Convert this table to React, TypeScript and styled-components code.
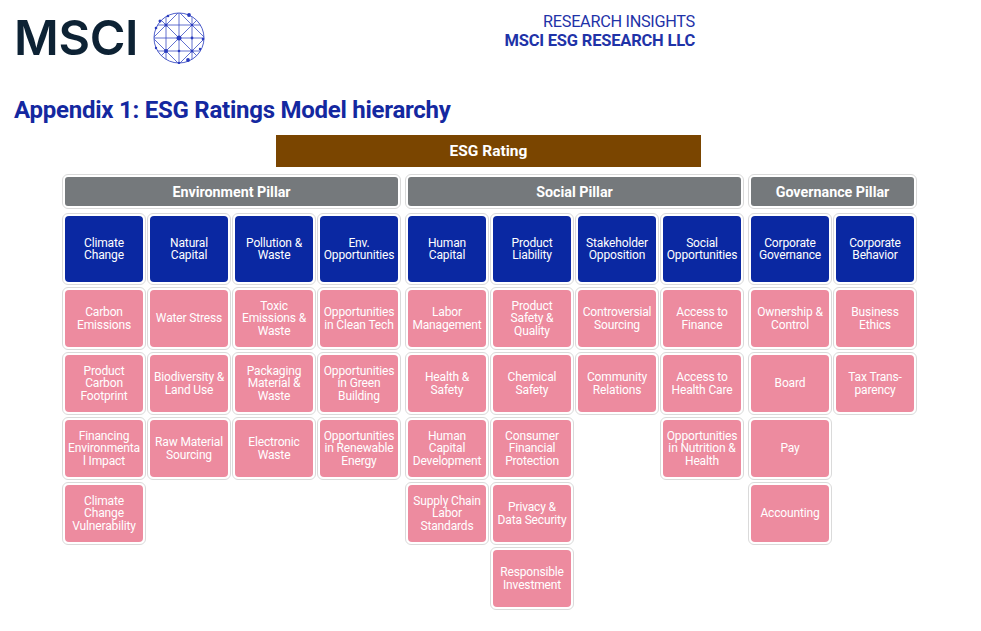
import React from "react";
import styled, { createGlobalStyle } from "styled-components";

const Global = createGlobalStyle`
  html, body { margin: 0; padding: 0; background: #ffffff; }
  body { font-family: Roboto, "Liberation Sans", Arial, sans-serif; }
`;

const Page = styled.div`
  width: 981px;
  height: 631px;
  overflow: hidden;
  background: #fff;
`;

const Header = styled.header`
  display: flex;
  justify-content: space-between;
  align-items: flex-start;
  width: 681px;
  padding: 12px 0 0 14px;
  height: 56px;
`;

const Logo = styled.div`
  display: flex;
  align-items: center;
  gap: 15px;
`;

const LogoText = styled.span`
  font-family: Inter, "Noto Sans", sans-serif;
  font-weight: 600;
  font-size: 48.5px;
  line-height: 52px;
  letter-spacing: -0.3px;
  color: #0d2234;
`;

const HeaderRight = styled.div`
  text-align: right;
  color: #1f33a8;
  font-size: 16.5px;
  line-height: 19px;
`;

const HeaderLine = styled.div<{ $bold?: boolean }>`
  font-weight: ${(p) => (p.$bold ? 700 : 400)};
  font-size: ${(p) => (p.$bold ? "16.5px" : "16.3px")};
  letter-spacing: ${(p) => (p.$bold ? "-0.2px" : "-0.3px")};
`;

const Title = styled.h1`
  margin: 28px 0 0 14px;
  font-size: 24px;
  line-height: 28px;
  font-weight: 700;
  color: #1428a0;
  letter-spacing: -0.25px;
`;

const Chart = styled.div`
  margin: 11px 0 0 62px;
  width: 853px;
  display: flex;
  flex-direction: column;
  align-items: center;
`;

const RatingBar = styled.div`
  width: 425px;
  height: 32px;
  background: #7a4500;
  color: #fff;
  font-weight: 700;
  font-size: 15.5px;
  display: flex;
  align-items: center;
  justify-content: center;
`;

const Pillars = styled.div`
  margin-top: 7px;
  display: flex;
  gap: 4px;
  align-self: stretch;
  align-items: flex-start;
`;

const PillarCol = styled.div`
  display: flex;
  flex-direction: column;
  gap: 4px;
`;

const Frame = styled.div<{ $h: number }>`
  box-sizing: border-box;
  height: ${(p) => p.$h}px;
  border: 1px solid #dadada;
  border-radius: 6px;
  padding: 2px;
  background: #fff;
`;

const PillarHead = styled.div`
  height: 100%;
  border-radius: 3px;
  background: #75797c;
  color: #fff;
  font-weight: 700;
  font-size: 14.3px;
  display: flex;
  align-items: center;
  justify-content: center;
`;

const Columns = styled.div<{ $n: number }>`
  display: grid;
  grid-template-columns: repeat(${(p) => p.$n}, 84px);
  column-gap: 1px;
  align-items: start;
`;

const Column = styled.div`
  display: flex;
  flex-direction: column;
  gap: 2px;
`;

const Tile = styled.div<{ $kind: "theme" | "issue" }>`
  height: 100%;
  border-radius: 4px;
  background: ${(p) => (p.$kind === "theme" ? "#0a28a2" : "#ed8b9f")};
  color: #fff;
  font-size: 12px;
  line-height: 12.2px;
  white-space: pre-line;
  text-align: center;
  display: flex;
  align-items: center;
  justify-content: center;
  letter-spacing: -0.15px;
`;

type Theme = { name: string; issues: string[] };
type Pillar = { name: string; themes: Theme[] };

const data: Pillar[] = [
  {
    name: "Environment Pillar",
    themes: [
      {
        name: "Climate\nChange",
        issues: [
          "Carbon\nEmissions",
          "Product\nCarbon\nFootprint",
          "Financing\nEnvironmenta\nl Impact",
          "Climate\nChange\nVulnerability",
        ],
      },
      {
        name: "Natural\nCapital",
        issues: ["Water Stress", "Biodiversity &\nLand Use", "Raw Material\nSourcing"],
      },
      {
        name: "Pollution &\nWaste",
        issues: ["Toxic\nEmissions &\nWaste", "Packaging\nMaterial &\nWaste", "Electronic\nWaste"],
      },
      {
        name: "Env.\nOpportunities",
        issues: [
          "Opportunities\nin Clean Tech",
          "Opportunities\nin Green\nBuilding",
          "Opportunities\nin Renewable\nEnergy",
        ],
      },
    ],
  },
  {
    name: "Social Pillar",
    themes: [
      {
        name: "Human\nCapital",
        issues: [
          "Labor\nManagement",
          "Health &\nSafety",
          "Human\nCapital\nDevelopment",
          "Supply Chain\nLabor\nStandards",
        ],
      },
      {
        name: "Product\nLiability",
        issues: [
          "Product\nSafety &\nQuality",
          "Chemical\nSafety",
          "Consumer\nFinancial\nProtection",
          "Privacy &\nData Security",
          "Responsible\nInvestment",
        ],
      },
      {
        name: "Stakeholder\nOpposition",
        issues: ["Controversial\nSourcing", "Community\nRelations"],
      },
      {
        name: "Social\nOpportunities",
        issues: ["Access to\nFinance", "Access to\nHealth Care", "Opportunities\nin Nutrition &\nHealth"],
      },
    ],
  },
  {
    name: "Governance Pillar",
    themes: [
      {
        name: "Corporate\nGovernance",
        issues: ["Ownership &\nControl", "Board", "Pay", "Accounting"],
      },
      {
        name: "Corporate\nBehavior",
        issues: ["Business\nEthics", "Tax Trans-\nparency"],
      },
    ],
  },
];

const Globe = () => {
  const c = 26;
  const r = 25;
  return (
    <svg width="52" height="52" viewBox="0 0 52 52" aria-hidden="true">
      <defs>
        <clipPath id="gclip">
          <circle cx={c} cy={c} r={r} />
        </clipPath>
      </defs>
      <g stroke="#3a4cc4" strokeWidth="0.8" fill="none" clipPath="url(#gclip)">
        <line x1="13" y1="0" x2="13" y2="52" />
        <line x1="26" y1="0" x2="26" y2="52" />
        <line x1="39" y1="0" x2="39" y2="52" />
        <line x1="0" y1="13" x2="52" y2="13" />
        <line x1="0" y1="26" x2="52" y2="26" />
        <line x1="0" y1="39" x2="52" y2="39" />
        <line x1="0" y1="26" x2="26" y2="0" />
        <line x1="0" y1="52" x2="52" y2="0" />
        <line x1="26" y1="52" x2="52" y2="26" />
        <line x1="0" y1="26" x2="26" y2="52" />
        <line x1="0" y1="0" x2="52" y2="52" />
        <line x1="26" y1="0" x2="52" y2="26" />
      </g>
      <circle cx={c} cy={c} r={r} stroke="#3a4cc4" strokeWidth="0.9" fill="none" />
      <g fill="#2a3cbf">
        <circle cx="26" cy="26" r="2.5" />
        <circle cx="13" cy="13" r="1.6" />
        <circle cx="39" cy="39" r="1.5" />
        <circle cx="13" cy="39" r="2" />
        <circle cx="39" cy="13" r="1.3" />
        <circle cx="39" cy="26" r="1.4" />
        <circle cx="26" cy="39" r="1.3" />
        <circle cx="7" cy="9" r="1.5" />
        <circle cx="3" cy="16" r="1.3" />
        <circle cx="3" cy="36" r="1.2" />
        <circle cx="15" cy="4" r="1.3" />
        <circle cx="36" cy="3" r="1.9" />
        <circle cx="50" cy="27" r="1.3" />
        <circle cx="47" cy="37" r="1.2" />
        <circle cx="35" cy="48" r="1.9" />
        <circle cx="26" cy="51" r="1.2" />
      </g>
    </svg>
  );
};

export default function App() {
  return (
    <Page>
      <Global />
      <Header>
        <Logo>
          <LogoText>MSCI</LogoText>
          <Globe />
        </Logo>
        <HeaderRight>
          <HeaderLine>RESEARCH INSIGHTS</HeaderLine>
          <HeaderLine $bold>MSCI ESG RESEARCH LLC</HeaderLine>
        </HeaderRight>
      </Header>
      <Title>Appendix 1: ESG Ratings Model hierarchy</Title>
      <Chart>
        <RatingBar>ESG Rating</RatingBar>
        <Pillars>
          {data.map((p) => (
            <PillarCol key={p.name}>
              <Frame $h={35}>
                <PillarHead>{p.name}</PillarHead>
              </Frame>
              <Columns $n={p.themes.length}>
                {p.themes.map((t) => (
                  <Column key={t.name}>
                    <Frame $h={72}>
                      <Tile $kind="theme">{t.name}</Tile>
                    </Frame>
                    {t.issues.map((i) => (
                      <Frame $h={63} key={i}>
                        <Tile $kind="issue">{i}</Tile>
                      </Frame>
                    ))}
                  </Column>
                ))}
              </Columns>
            </PillarCol>
          ))}
        </Pillars>
      </Chart>
    </Page>
  );
}
